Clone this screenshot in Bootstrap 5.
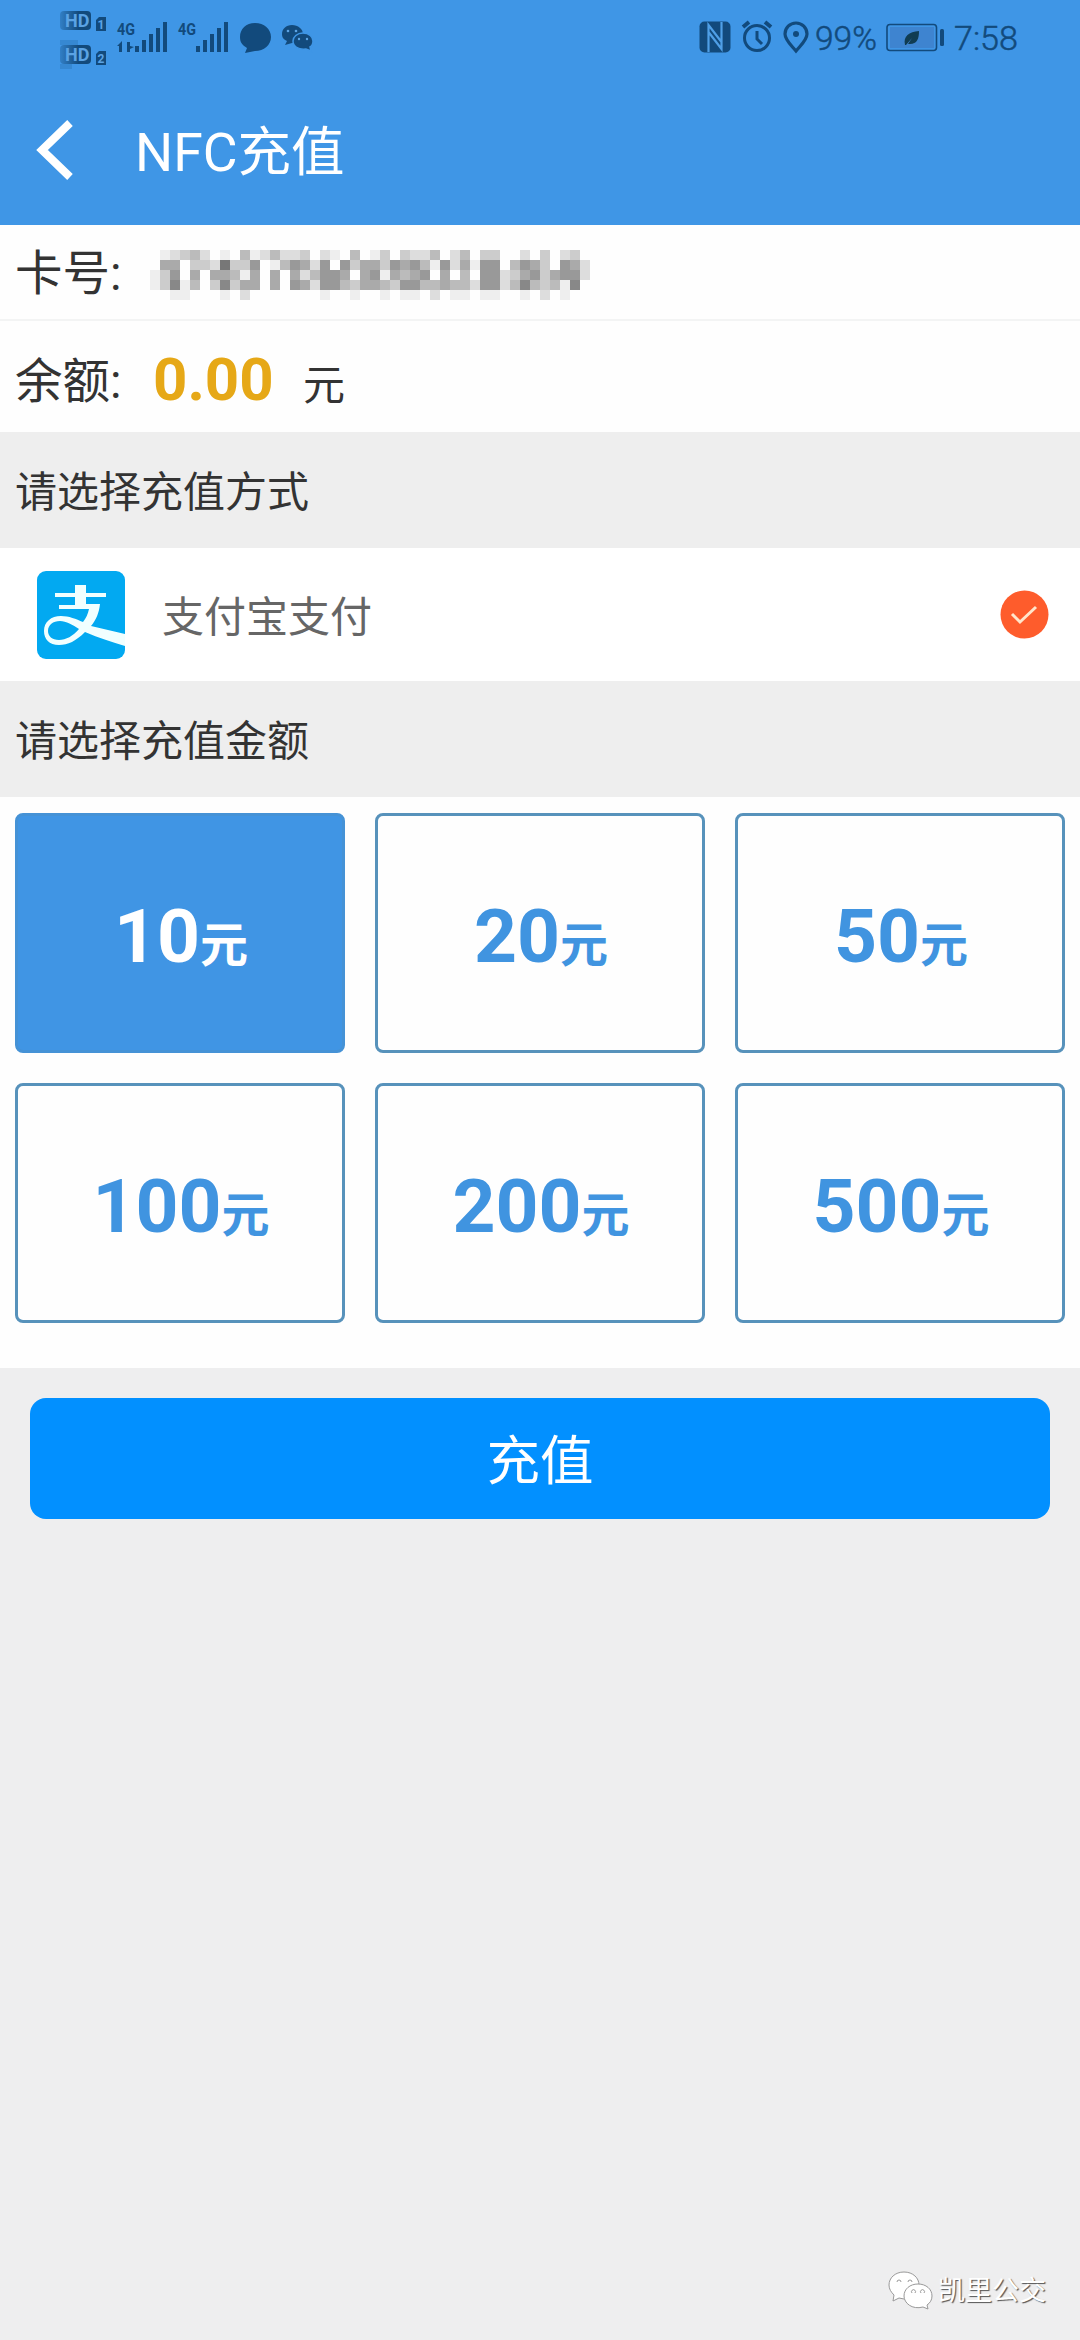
<!DOCTYPE html>
<html lang="zh-CN">
<head>
<meta charset="utf-8">
<meta name="viewport" content="width=device-width, initial-scale=1">
<title>NFC充值</title>
<link href="https://cdn.jsdelivr.net/npm/bootstrap@5.3.0/dist/css/bootstrap.min.css" rel="stylesheet">
<style>
body{font-family:Roboto,"Noto Sans CJK SC",sans-serif;background:#eeeeef;color:#333;min-height:2340px;line-height:1}
.blue-top{background:#3f96e6;height:225px}
.status-strip{height:75px}
.title-strip{height:150px;padding-left:36px}
.page-title{font-size:53.5px;font-weight:400;color:#fff;margin-left:61px;padding-top:7px}
.info-row{padding-left:15px;background:#fefefe;font-size:47.500px}
.row-no{height:96px;border-bottom:2px solid #f3f4f4;padding-top:6px}
.row-bal{height:111px;padding-top:6px}
.info-name{width:108px;white-space:nowrap}
.row-bal .info-name{padding-top:6px}
.masked-no{margin-left:27px}
.bal-num{font-size:60px;font-weight:700;color:#e6a817;margin-left:30px;width:121px}
.bal-unit{font-size:42px;margin-left:29px;padding-top:12px}
.section-bar{height:116px;background:#eee;padding:6px 0 0 15px;font-size:42px}
.pay-row{height:133px;background:#fff;padding:0 31px 0 37px}
.pay-name{font-size:42px;color:#666;margin-left:37px;padding-top:6px}
.amounts{background:#fefefe;height:571px;padding:16px 15px 0}
.amounts .row{--bs-gutter-x:30px;--bs-gutter-y:30px}
.tile{height:240px;border:3px solid #5792bb;border-radius:8px;color:#4094e0;background:#fefefe;font-size:75px;font-weight:700;line-height:1;padding:12px 0 6px 2px}
.tile small{font-size:48px;font-weight:700}
.tile.active,.tile.active:hover{background:#4095e4!important;border-color:#4592d6!important;color:#fff!important}
.go-wrap{padding:30px}
.btn-go{height:121px;border-radius:16px;background:#0290ff;color:#fff;font-size:53.5px;line-height:1;border:0;padding:13px 0 6px}
.watermark{position:absolute;right:34px;bottom:29px;color:#fff;font-size:27px;gap:5px;text-shadow:1.2px 1.2px 1px #555}
</style>
<script src="https://cdn.jsdelivr.net/npm/bootstrap@5.3.0/dist/js/bootstrap.bundle.min.js"></script>
</head>
<body class="position-relative m-0">
<header class="blue-top">
  <div class="status-strip d-flex justify-content-between">
    <svg width="330" height="75" viewBox="0 0 330 75" fill="#124a7c" font-family="Roboto">
      <defs><linearGradient id="fade"><stop offset="0" stop-color="#124a7c" stop-opacity=".3"/><stop offset=".6" stop-color="#124a7c"/></linearGradient></defs>
      <rect x="60" y="11" width="31" height="19" rx="4" fill="url(#fade)"/>
      <rect x="60" y="45" width="31" height="19" rx="4" fill="url(#fade)"/>
      <path d="M60 40h18v5H60zM60 64h12v5H60z" opacity=".18"/>
      <g fill="#5ba3e4" font-size="18" font-weight="700"><text x="65" y="27">HD</text><text x="65" y="61">HD</text></g>
      <path d="M96 20l3-3h7v14H96zM96 54l3-3h7v14H96z"/>
      <g fill="#5ba3e4" font-size="12" font-weight="700"><text x="97.500" y="29">1</text><text x="97.500" y="63">2</text></g>
      <g font-size="17" font-weight="700"><text x="117" y="35" textLength="18" lengthAdjust="spacingAndGlyphs">4G</text><text x="178" y="35" textLength="18" lengthAdjust="spacingAndGlyphs">4G</text></g>
      <path d="M117 46l5-5v11h-3v-6zM127 42h3v4l4 1-4 2v3h-3z"/>
      <path d="M135 46h4v6h-4zM142 40h4v12h-4zM149 34h4v18h-4zM156 28h4v24h-4zM163 22h4v30h-4z"/>
      <path d="M196 46h4v6h-4zM203 40h4v12h-4zM210 34h4v18h-4zM217 28h4v24h-4zM224 22h4v30h-4z"/>
      <path d="M255 23c9 0 16 6 16 14s-7 14-16 14l-10 2 2-5c-5-3-7-6-7-11 0-8 6-14 15-14z"/>
      <path d="M292 25c6 0 11 4 11 9s-5 9-11 9l-7 2 2-4c-4-2-5-4-5-7 0-5 4-9 10-9z"/>
      <path d="M303 33c6 0 10 4 10 8 0 3-1 5-3 6l1 4-5-2c-8 1-13-3-13-8 0-4 4-8 10-8z" stroke="#3f96e6" stroke-width="1.500"/>
      <g fill="#5ba3e4"><circle cx="288" cy="31" r="1.300"/><circle cx="296" cy="31" r="1.300"/><circle cx="299" cy="39" r="1.200"/><circle cx="307" cy="39" r="1.200"/></g>
    </svg>
    <svg width="400" height="75" viewBox="680 0 400 75" fill="none" stroke="#124a7c" font-family="Roboto">
      <rect x="699.500" y="21.500" width="31" height="31" rx="5" fill="#124a7c" stroke="none"/>
      <path d="M708.500 52V25l13 17M721.500 22v27l-13-17" stroke="#4f9fe6" stroke-width="2.200"/>
      <circle cx="757" cy="38" r="12.500" stroke-width="3"/><path d="M757 31v8l5 5" stroke-width="3"/><path d="M743 27l6-5M765 22l6 5" stroke-width="4"/>
      <path d="M796 51c-5-6-11-11-11-17a11 11 0 0 1 22 0c0 6-6 11-11 17z" stroke-width="3.200"/><circle cx="796" cy="34" r="3" fill="#124a7c" stroke="none"/>
      <g fill="#124a7c" stroke-width=".5" font-size="34" font-weight="300"><text x="815" y="50" textLength="62" lengthAdjust="spacingAndGlyphs">99%</text><text x="954" y="50" textLength="64" lengthAdjust="spacingAndGlyphs">7:58</text></g>
      <rect x="887" y="24.500" width="49.500" height="26" rx="3" stroke-width="1.600"/><rect x="890" y="27" width="44" height="21" fill="#3f7fca" stroke="none" opacity=".8"/>
      <rect x="940" y="29" width="4" height="17" rx="1.500" fill="#124a7c" stroke="none"/>
      <path d="M905 45c-2-9 4-13 14-14 0 8-2 14-11 13l4-6-6 7z" fill="#103c52" stroke="none"/>
    </svg>
  </div>
  <nav class="title-strip d-flex align-items-center">
    <svg width="38" height="62" viewBox="0 0 38 62" fill="none" stroke="#fff" stroke-width="8"><path d="M34 4L6 31l28 27"/></svg>
    <h1 class="page-title mb-0">NFC充值</h1>
  </nav>
</header>
<main>
  <div class="info-row row-no d-flex align-items-center">
    <span class="info-name">卡号:</span>
    <svg id="maskedNo" class="masked-no" width="440" height="50" shape-rendering="crispEdges" role="img"></svg>
  </div>
  <div class="info-row row-bal d-flex align-items-center">
    <span class="info-name">余额:</span><span class="bal-num">0.00</span><span class="bal-unit">元</span>
  </div>
  <div class="section-bar d-flex align-items-center">请选择充值方式</div>
  <div class="pay-row d-flex align-items-center">
    <svg width="88" height="88" viewBox="0 0 88 88"><rect width="88" height="88" rx="9" fill="#02a9f1"/>
      <path d="M38 14h11v8h20v4H49v7h14c-1 9-4 16-9 22l34 8v12C75 71 62 67 48 61 39 70 31 74 22 74 12 74 7 68 7 60c0-9 7-15 17-15 8 0 15 3 22 6 3-4 5-8 6-13H22v-4h16v-8H18v-4h20zM42 58c-6-4-13-8-19-8-7 0-12 4-12 10 0 5 4 9 11 9s14-4 20-11z" fill="#f1ffff"/></svg>
    <span class="pay-name">支付宝支付</span>
    <svg class="ms-auto" width="49" height="49" viewBox="0 0 49 49"><circle cx="24.500" cy="24.500" r="24" fill="#fe5c2c"/><path d="M12 24l8 8 16-15" fill="none" stroke="#ffe5cb" stroke-width="3"/></svg>
  </div>
  <div class="section-bar d-flex align-items-center">请选择充值金额</div>
  <div class="amounts">
    <div class="row row-cols-3">
      <div class="col"><button class="btn tile active w-100">10<small>元</small></button></div>
      <div class="col"><button class="btn tile w-100">20<small>元</small></button></div>
      <div class="col"><button class="btn tile w-100">50<small>元</small></button></div>
      <div class="col"><button class="btn tile w-100">100<small>元</small></button></div>
      <div class="col"><button class="btn tile w-100">200<small>元</small></button></div>
      <div class="col"><button class="btn tile w-100">500<small>元</small></button></div>
    </div>
  </div>
  <div class="go-wrap"><button class="btn btn-go w-100">充值</button></div>
</main>
<div class="watermark d-flex align-items-center">
  <svg width="45" height="40" viewBox="0 0 45 40" fill="#fff" stroke="#999" stroke-width="1"><path d="M16 1c9 0 15 6 15 13s-6 14-15 14l-5-1-6 3 1-6C3 21 1 18 1 14 1 7 7 1 16 1z"/><path d="M30 13c8 0 14 5 14 12 0 4-2 7-5 9l1 4-5-2c-11 3-19-4-19-11s6-12 14-12z"/><g fill="none"><path d="M9 11a2 2 0 1 1 4 0M20 11a2 2 0 1 1 4 0M24 22a2 2 0 1 1 3 0M33 22a2 2 0 1 1 3 0"/></g></svg>
  <span>凯里公交</span>
</div>
<script>
// One hex digit per 10px block of the masked card number, from dark to light
const blocks = [
  "fedcbdfefbedbddcfdefbfecfcddbfdbfccffdfcfdcf",
  "faafccd7cc9feb9ad9f9caac9a9be9dae99fb9acf9ad",
  "ec9fafaabeafafadb99afa9eaba9fafbf99dca9ca99d",
  "ec8ebfc8caafaf9ad99bcaabc99bbabbd99db8bcbe8f",
  "ffeefffefdfffffffeffeffefeefdfeefeeffefdfeff"
];
document.getElementById("maskedNo").innerHTML = blocks.map((line, y) =>
  [...line].map((c, x) => c === "f" ? "" : `<rect x="${x * 10}" y="${y * 10}" width="10" height="10" fill="#${c}${c}${c}"/>`).join("")
).join("");
</script>
</body>
</html>
